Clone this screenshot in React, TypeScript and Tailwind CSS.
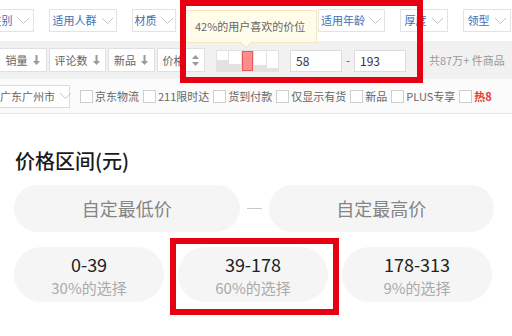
import type { ReactNode } from "react";

const font = { fontFamily: '"Noto Sans CJK SC", "Noto Sans", sans-serif' };

function Chevron() {
  return (
    <svg width="13" height="8" viewBox="0 0 13 8" className="ml-[4px] shrink-0">
      <path d="M1 1l5.5 5.5L12 1" fill="none" stroke="#c4c4c4" strokeWidth="1" />
    </svg>
  );
}

function DownArrow() {
  return (
    <svg width="9" height="12" viewBox="0 0 9 12" className="ml-[4px] shrink-0">
      <path d="M4.5 1v7" stroke="#999" strokeWidth="2" />
      <path d="M1 7l3.5 4L8 7z" fill="#999" />
    </svg>
  );
}

function UpDown() {
  return (
    <svg width="9" height="13" viewBox="0 0 9 13" className="ml-[6px] shrink-0">
      <path d="M1 5l3.5-4L8 5z" fill="#999" />
      <path d="M1 8l3.5 4L8 8z" fill="#999" />
    </svg>
  );
}

function Filter({ label, width }: { label: string; width: number }) {
  return (
    <div
      className="flex h-[23px] shrink-0 items-center justify-center whitespace-nowrap border border-[#e3e3e3] bg-white text-[11px] text-[#3d6fb6]"
      style={{ width }}
    >
      {label}
      <Chevron />
    </div>
  );
}

function SortBtn({ children, width }: { children: ReactNode; width: number }) {
  return (
    <div
      className="flex h-[24px] shrink-0 items-center justify-center whitespace-nowrap border border-[#e0e0e0] bg-white text-[11px] text-[#666]"
      style={{ width }}
    >
      {children}
    </div>
  );
}

function Check({ label, red }: { label: string; red?: boolean }) {
  return (
    <div className="flex shrink-0 items-center whitespace-nowrap">
      <span className="h-[13px] w-[13px] border border-[#cfcfcf] bg-white" />
      <span
        className={`ml-[2px] text-[11px] ${red ? "font-bold text-[#e4393c]" : "text-[#666]"}`}
      >
        {label}
      </span>
    </div>
  );
}

const bars = [
  { h: 11, hot: false },
  { h: 7, hot: false },
  { h: 20, hot: true },
  { h: 6, hot: false },
  { h: 3, hot: false },
];

const ranges = [
  { range: "0-39", pct: "30%的选择" },
  { range: "39-178", pct: "60%的选择" },
  { range: "178-313", pct: "9%的选择" },
];

export default function App() {
  return (
    <div className="relative h-[336px] w-[512px] overflow-hidden bg-white" style={font}>
      {/* row 1: attribute filters (middle ones sit under the tooltip) */}
      <div className="flex h-[41px] items-center gap-[15px] bg-white">
        <div className="-ml-[14px] shrink-0">
          <Filter label="性别" width={48} />
        </div>
        <Filter label="适用人群" width={68} />
        <Filter label="材质" width={44} />
        <div className="w-[112px] shrink-0" />
        <Filter label="适用年龄" width={67} />
        <Filter label="厚度" width={48} />
        <Filter label="领型" width={48} />
      </div>

      {/* row 2: sort bar */}
      <div className="flex h-[38px] items-center whitespace-nowrap bg-[#f1f1f1]">
        <div className="-ml-[1px] flex shrink-0 gap-[2px]">
          <SortBtn width={48}>
            销量
            <DownArrow />
          </SortBtn>
          <SortBtn width={57}>
            评论数
            <DownArrow />
          </SortBtn>
          <SortBtn width={47}>
            新品
            <DownArrow />
          </SortBtn>
          <SortBtn width={48}>
            价格
            <UpDown />
          </SortBtn>
        </div>
        <div className="ml-[11px] mt-[2px] flex h-[22px] w-[63px] shrink-0 items-stretch">
          {bars.map((b, i) => (
            <div
              key={i}
              className="flex flex-1 flex-col justify-end border border-l-0 border-[#e2e2e2] bg-white first:border-l"
            >
              <div
                className={b.hot ? "border border-[#e35a5a] bg-[#ff8c8c]" : "bg-[#e2e2e2]"}
                style={{ height: b.h }}
              />
            </div>
          ))}
        </div>
        <div className="ml-[11px] mt-[2px] flex h-[22px] w-[52px] shrink-0 items-center border border-[#dcdcdc] bg-white pl-[5px] text-[12px] text-[#333]">
          58
        </div>
        <span className="w-[12px] shrink-0 text-center text-[12px] text-[#666]">-</span>
        <div className="mt-[2px] flex h-[22px] w-[52px] shrink-0 items-center border border-[#dcdcdc] bg-white pl-[5px] text-[12px] text-[#333]">
          193
        </div>
        <span className="ml-[23px] text-[11px] text-[#999]">共87万+ 件商品</span>
      </div>

      {/* row 3: location and checkboxes */}
      <div className="flex h-[35px] items-center whitespace-nowrap border-b border-[#e8e8e8] bg-[#fbfbfb]">
        <div className="-ml-[5px] flex h-[23px] w-[75px] shrink-0 items-center border border-[#dcdcdc] bg-white pl-[4px] text-[11px] text-[#666]">
          广东广州市
          <Chevron />
        </div>
        <div className="ml-[10px] flex gap-[4px]">
          <Check label="京东物流" />
          <Check label="211限时达" />
          <Check label="货到付款" />
          <Check label="仅显示有货" />
          <Check label="新品" />
          <Check label="PLUS专享" />
          <Check label="热8" red />
        </div>
      </div>

      {/* price range panel */}
      <div className="pl-[14px] pr-[18px] pt-[33px]">
        <h2 className="pl-[1px] text-[20px] font-medium leading-[28px] text-[#1a1a1a]">
          价格区间(元)
        </h2>
        <div className="mt-[10px] flex items-center">
          <div className="flex h-[47px] flex-1 items-center justify-center rounded-full bg-[#f5f5f5] text-[18px] text-[#858585]">
            自定最低价
          </div>
          <div className="mx-[7px] h-px w-[15px] bg-[#c8c8c8]" />
          <div className="flex h-[47px] flex-1 items-center justify-center rounded-full bg-[#f5f5f5] text-[18px] text-[#858585]">
            自定最高价
          </div>
        </div>
        <div className="mt-[15px] grid grid-cols-3 gap-[14px] pr-[2px]">
          {ranges.map((r) => (
            <div
              key={r.range}
              className="flex h-[55px] flex-col items-center justify-center rounded-full bg-[#f5f5f5]"
            >
              <span className="text-[18px] leading-[26px] text-[#222]">{r.range}</span>
              <span className="text-[15px] leading-[22px] text-[#aaa]">{r.pct}</span>
            </div>
          ))}
        </div>
      </div>

      {/* tooltip over the histogram */}
      <div className="absolute left-[185px] top-[10px] flex h-[33px] w-[132px] items-center whitespace-nowrap border border-[#f3e6c0] bg-[#fffcea] pl-[9px] text-[11px] text-[#666]">
        42%的用户喜欢的价位
        <span className="absolute -bottom-[5px] left-[56px] h-[8px] w-[8px] rotate-45 border-b border-r border-[#f3e6c0] bg-[#fffcea]" />
      </div>

      {/* annotation boxes */}
      <div className="pointer-events-none absolute left-[180px] top-0 h-[83px] w-[243px] border-[6px] border-[#e60012]" />
      <div className="pointer-events-none absolute left-[170px] top-[238px] h-[77px] w-[169px] border-[6px] border-[#e60012]" />
    </div>
  );
}
